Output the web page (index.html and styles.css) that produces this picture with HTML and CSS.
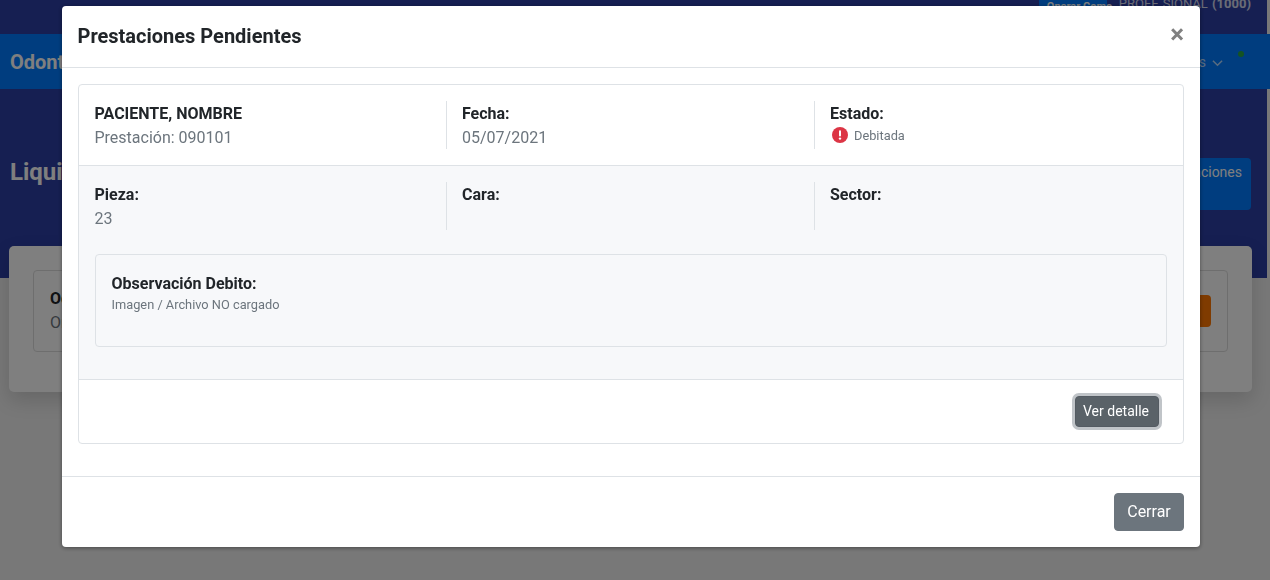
FILE: index.html
```html
<!DOCTYPE html>
<html lang="es">
<head>
    <meta charset="UTF-8">
    <meta name="viewport" content="width=device-width, initial-scale=1.0">
    <title>Prestaciones Pendientes</title>
    <link rel="stylesheet" href="styles.css">
</head>
<body>

<div class="topbar">
    <span class="badge-operar">Operar Como</span>
    <span class="topbar-user">PROFE SIONAL <b>(1000)</b></span>
</div>

<nav class="navbar">
    <span class="navbar-brand">Odontología</span>
    <span class="navbar-menu">
        Opciones
        <svg class="chevron" viewBox="0 0 12 8" width="11" height="8"><path d="M1 1.5l5 5 5-5" fill="none" stroke="currentColor" stroke-width="1.6"/></svg>
    </span>
    <span class="status-dot"></span>
</nav>

<header class="hero">
    <h1>Liquidaciones</h1>
    <button class="btn-hero">Liquidaciones</button>
</header>

<main class="main-card">
    <div class="inner-card">
        <div>
            <strong>Odontólogo</strong>
            <div class="muted">Orden</div>
        </div>
        <button class="btn-orange">Ver</button>
    </div>
</main>

<div class="backdrop"></div>

<div class="modal">
    <div class="modal-header">
        <h5>Prestaciones Pendientes</h5>
        <span class="close">&times;</span>
    </div>

    <div class="modal-body">
        <div class="card">
            <div class="row">
                <div class="col">
                    <strong>PACIENTE, NOMBRE</strong>
                    <span class="muted">Prestación: 090101</span>
                </div>
                <div class="col">
                    <strong>Fecha:</strong>
                    <span class="muted">05/07/2021</span>
                </div>
                <div class="col">
                    <strong>Estado:</strong>
                    <span class="estado">
                        <svg viewBox="0 0 16 16" width="16" height="16"><circle cx="8" cy="8" r="8" fill="#dc3545"/><rect x="7" y="3.2" width="2" height="6.2" rx="1" fill="#fff"/><circle cx="8" cy="11.6" r="1.2" fill="#fff"/></svg>
                        Debitada
                    </span>
                </div>
            </div>

            <div class="detalle">
                <div class="row">
                    <div class="col">
                        <strong>Pieza:</strong>
                        <span class="muted">23</span>
                    </div>
                    <div class="col">
                        <strong>Cara:</strong>
                    </div>
                    <div class="col">
                        <strong>Sector:</strong>
                    </div>
                </div>

                <div class="observacion">
                    <strong>Observación Debito:</strong>
                    <small>Imagen / Archivo NO cargado</small>
                </div>
            </div>

            <div class="card-footer">
                <button class="btn btn-sm">Ver detalle</button>
            </div>
        </div>
    </div>

    <div class="modal-footer">
        <button class="btn btn-cerrar">Cerrar</button>
    </div>
</div>

</body>
</html>
```

FILE: styles.css
```css
* {
    box-sizing: border-box;
}

html, body {
    height: 100%;
}

body {
    font-family: Roboto, 'Liberation Sans', sans-serif;
    font-size: 16px;
    line-height: 1.5;
    margin: 0;
    padding: 0;
    overflow: hidden;
    background-color: #f0f0f0;
    color: #212529;
}

strong {
    font-weight: 700;
}

.muted {
    color: #6c757d;
}

/* pagina de fondo */
.topbar {
    height: 34px;
    margin-right: 3px;
    background-color: #2c3ea4;
    display: flex;
    justify-content: flex-end;
    align-items: flex-start;
    gap: 12px;
    padding-right: 16px;
    overflow: hidden;
    font-size: 13px;
    color: #fff;
}

.badge-operar {
    background-color: #007bff;
    font-size: 11px;
    font-weight: 700;
    line-height: 14px;
    height: 20px;
    padding: 0 8px;
    width: 68px;
    white-space: nowrap;
}

.topbar-user {
    line-height: 8px;
    word-spacing: 1px;
    opacity: .8;
}

.navbar {
    height: 55px;
    background-color: #007bff;
    display: flex;
    align-items: center;
    justify-content: space-between;
    padding: 0 47px 0 10px;
    color: #fff;
    position: relative;
}

.navbar-brand {
    font-size: 20px;
    font-weight: 700;
}

.navbar-menu {
    display: flex;
    align-items: center;
    gap: 6px;
    font-size: 14px;
    margin-top: 2px;
    opacity: .7;
}

.status-dot {
    position: absolute;
    right: 26px;
    top: 17px;
    width: 6px;
    height: 6px;
    border-radius: 50%;
    background-color: #28a745;
}

.hero {
    height: 189px;
    margin-right: 3px;
    background-color: #2c3ea4;
    display: flex;
    justify-content: space-between;
    align-items: flex-start;
    padding: 69px 16px 0 10px;
}

.hero h1 {
    margin: 0;
    font-size: 24px;
    line-height: 28px;
    font-weight: 700;
    color: #fff;
}

.btn-hero {
    width: 150px;
    height: 52px;
    border: none;
    border-radius: 4px;
    background-color: #007bff;
    color: #fff;
    font-family: inherit;
    font-size: 14px;
    text-align: right;
    padding: 0 9px 24px 0;
}

.main-card {
    margin: -32px 18px 0 9px;
    height: 146px;
    background-color: #fff;
    border-radius: 5px;
    padding: 24px;
    box-shadow: 0 8px 20px rgba(0, 0, 0, 0.15);
    position: relative;
}

.inner-card {
    height: 82px;
    border: 1px solid #ddd;
    border-radius: 4px;
    padding: 16px;
    display: flex;
    justify-content: space-between;
    align-items: center;
}

.btn-orange {
    width: 60px;
    height: 32px;
    border: none;
    border-radius: 4px;
    background-color: #ff7600;
    color: #fff;
}

/* modal */
.backdrop {
    position: fixed;
    top: 0;
    left: 0;
    right: 0;
    bottom: 0;
    background-color: rgba(0, 0, 0, 0.5);
}

.modal {
    position: fixed;
    top: 6px;
    left: 62px;
    width: 1138px;
    height: 541px;
    background-color: #fff;
    border-radius: 4px;
    box-shadow: 0 1px 4px rgba(0, 0, 0, 0.4);
}

.modal-header {
    height: 62px;
    border-bottom: 1px solid #dee2e6;
    padding: 15px 16px 17px 15.5px;
    display: flex;
    justify-content: space-between;
    align-items: center;
}

.modal-header h5 {
    margin: 0;
    font-size: 20px;
    line-height: 30px;
    font-weight: 700;
}

.close {
    font-size: 26px;
    font-weight: 700;
    line-height: 1;
    color: #808080;
    margin-top: -4px;
}

.modal-body {
    padding: 16px;
    height: 408px;
}

.card {
    border: 1px solid #dee2e6;
    border-radius: 4px;
    height: 360px;
}

.row {
    display: flex;
    height: 80px;
    padding: 16px 0;
}

.col {
    width: 368px;
    padding: 1px 0 0 15px;
    border-right: 1px solid #dee2e6;
}

.col:first-child {
    padding-left: 15.5px;
}

.col:last-child {
    border-right: none;
}

.col strong,
.col .muted {
    display: block;
}

.estado {
    display: flex;
    align-items: center;
    gap: 6px;
    margin-top: -2px;
    font-size: 12.8px;
    line-height: 24px;
    color: #6c757d;
    padding-left: 2px;
}

.estado svg {
    margin-top: -2px;
}

.detalle {
    height: 215px;
    background-color: #f7f8fa;
    border-top: 1px solid #dee2e6;
    border-bottom: 1px solid #dee2e6;
}

.observacion {
    height: 93px;
    margin: 8px 16px 0;
    padding: 17px 16px 0 15.5px;
    border: 1px solid #dee2e6;
    border-radius: 4px;
}

.observacion strong {
    display: block;
}

.observacion small {
    display: block;
    font-size: 12.8px;
    line-height: 18px;
    color: #6c757d;
}

.card-footer {
    padding: 16px 24px 16px 0;
    display: flex;
    justify-content: flex-end;
}

.btn {
    border: 1px solid #6c757d;
    border-radius: 4px;
    background-color: #6c757d;
    color: #fff;
    font-family: inherit;
    font-size: 16px;
    line-height: 1.5;
    padding: 6px 12px;
}

.btn-sm {
    font-size: 14px;
    padding: 4px 9px 4px 7px;
    background-color: #5a6268;
    border-color: #545b62;
    box-shadow: 0 0 0 3px rgba(130, 138, 145, 0.5);
    height: 31px;
}

.modal-footer {
    height: 71px;
    border-top: 1px solid #dee2e6;
    padding: 16px;
    display: flex;
    justify-content: flex-end;
}

.btn-cerrar {
    width: 70px;
    height: 38px;
}
```
